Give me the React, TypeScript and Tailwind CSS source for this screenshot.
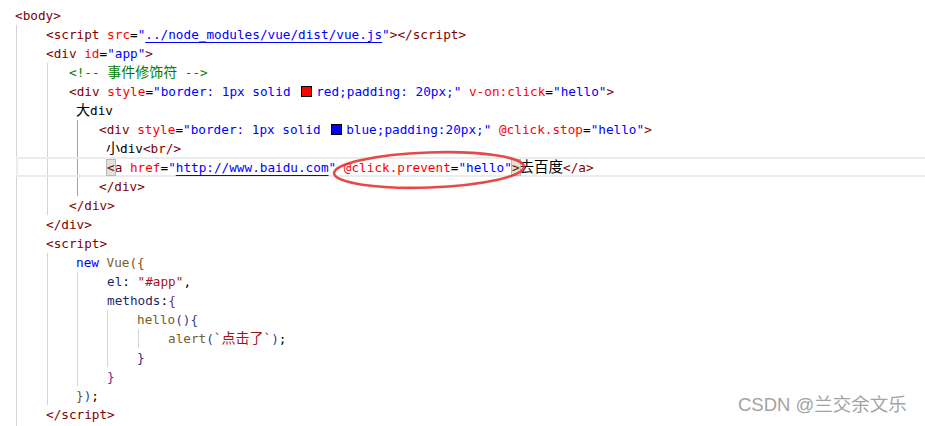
import React from "react";

const T = ({ c }: { c: string }) => <span className="text-[#800000]">{c}</span>;
const A = ({ c }: { c: string }) => <span className="text-[#ff0000]">{c}</span>;
const V = ({ c }: { c: string }) => <span className="text-[#0000ff]">{c}</span>;
const K = ({ c }: { c: string }) => <span className="text-black">{c}</span>;
const Z = ({ c, cls = "text-black" }: { c: string; cls?: string }) => (
  <span className={`font-['Noto_Sans_CJK_SC'] text-[14px] leading-none ${cls}`}>{c}</span>
);

const Guide = ({ cls }: { cls: string }) => <div className={`absolute w-px ${cls}`} />;

export default function App() {
  return (
    <div className="relative w-[925px] h-[426px] overflow-hidden bg-white">
      {/* indent guides */}
      <Guide cls="left-[16px] top-[25px] h-[401px] bg-[#d4d4d4]" />
      <Guide cls="left-[47px] top-[63px] h-[152px] bg-[#d4d4d4]" />
      <Guide cls="left-[77px] top-[120px] h-[76px] bg-[#a3a3a3]" />
      <Guide cls="left-[47px] top-[253px] h-[152px] bg-[#d4d4d4]" />
      <Guide cls="left-[77px] top-[272px] h-[114px] bg-[#d4d4d4]" />
      <Guide cls="left-[107px] top-[310px] h-[57px] bg-[#d4d4d4]" />
      <Guide cls="left-[138px] top-[329px] h-[19px] bg-[#d4d4d4]" />

      <div className="relative pt-[6px] font-['DejaVu_Sans_Mono','Noto_Sans_CJK_SC',monospace] text-[12.7px] leading-[19px] whitespace-pre">
        <div className="h-[19px] pl-[15px]">
          <T c="<body>" />
        </div>
        <div className="h-[19px] pl-[46px]">
          <T c="<script " />
          <A c="src" />
          <K c="=" />
          <V c={'"'} />
          <span className="text-[#0000ff] underline decoration-[#0000ff] underline-offset-[3px]">../node_modules/vue/dist/vue.js</span>
          <V c={'"'} />
          <T c="></script>" />
        </div>
        <div className="h-[19px] pl-[46px]">
          <T c="<div " />
          <A c="id" />
          <K c="=" />
          <V c={'"app"'} />
          <T c=">" />
        </div>
        <div className="h-[19px] pl-[69px] text-[#008000]">
          {"<!-- "}
          <Z c="事件修饰符" cls="text-[#008000]" />
          {" -->"}
        </div>
        <div className="h-[19px] pl-[69px]">
          <T c="<div " />
          <A c="style" />
          <K c="=" />
          <V c={'"border: 1px solid '} />
          <span className="inline-block w-[11px] h-[11px] ml-[3px] mr-[4px] bg-[#ff0000] border border-black align-[-1px]" />
          <V c={'red;padding: 20px;"'} />
          <K c=" " />
          <A c="v-on:click" />
          <K c="=" />
          <V c={'"hello"'} />
          <T c=">" />
        </div>
        <div className="h-[19px] pl-[76px]">
          <Z c="大" />
          <K c="div" />
        </div>
        <div className="h-[19px] pl-[99px]">
          <T c="<div " />
          <A c="style" />
          <K c="=" />
          <V c={'"border: 1px solid '} />
          <span className="inline-block w-[11px] h-[11px] ml-[3px] mr-[4px] bg-[#0000ff] border border-black align-[-1px]" />
          <V c={'blue;padding:20px;"'} />
          <K c=" " />
          <A c="@click.stop" />
          <K c="=" />
          <V c={'"hello"'} />
          <T c=">" />
        </div>
        <div className="h-[19px] pl-[106px]">
          <Z c="小" />
          <K c="div" />
          <T c="<br/>" />
        </div>
        <div className="-mt-[1px] h-[20px] ml-[16px] pl-[89px] box-border border-2 border-r-0 border-[#ececec] leading-[16px]">
          <span className="bg-[#dfe4da] outline outline-1 outline-[#b9b9b9] text-[#800000]">{"<"}</span>
          <T c="a " />
          <A c="href" />
          <K c="=" />
          <V c={'"'} />
          <span className="text-[#0000ff] underline decoration-[#0000ff] underline-offset-[3px]">http://www.baidu.com</span>
          <V c={'"'} />
          <K c=" " />
          <A c="@click.prevent" />
          <K c="=" />
          <V c={'"hello"'} />
          <span className="bg-[#dfe4da] outline outline-1 outline-[#b9b9b9] text-[#800000]">{">"}</span>
          <span className="font-['Noto_Sans_CJK_SC'] text-[14.5px] leading-none text-black">去百度</span>
          <T c="</a>" />
        </div>
        <div className="h-[19px] pl-[99px]">
          <T c="</div>" />
        </div>
        <div className="h-[19px] pl-[69px]">
          <T c="</div>" />
        </div>
        <div className="h-[19px] pl-[46px]">
          <T c="</div>" />
        </div>
        <div className="h-[19px] pl-[46px]">
          <T c="<script>" />
        </div>
        <div className="h-[19px] pl-[76px]">
          <span className="text-[#0000ff]">new</span>
          <K c=" " />
          <span className="text-[#795e26]">Vue</span>
          <span className="text-[#7a5020]">{"({"}</span>
        </div>
        <div className="h-[19px] pl-[107px]">
          <span className="text-[#2a1f66]">el</span>
          <K c=": " />
          <span className="text-[#a31515]">{'"#app"'}</span>
          <K c="," />
        </div>
        <div className="h-[19px] pl-[107px]">
          <span className="text-[#2a1f66]">methods</span>
          <K c=":" />
          <span className="text-[#6a2a8a]">{"{"}</span>
        </div>
        <div className="h-[19px] pl-[137px]">
          <span className="text-[#795e26]">hello</span>
          <span className="text-[#1f3fa0]">{"(){"}</span>
        </div>
        <div className="h-[19px] pl-[168px]">
          <span className="text-[#795e26]">alert</span>
          <span className="text-[#1f3fa0]">(</span>
          <span className="text-[#a31515]">`</span>
          <Z c="点击了" cls="text-[#a31515]" />
          <span className="text-[#a31515]">`</span>
          <span className="text-[#1f3fa0]">)</span>
          <K c=";" />
        </div>
        <div className="h-[19px] pl-[137px]">
          <span className="text-[#3a2a8a]">{"}"}</span>
        </div>
        <div className="h-[19px] pl-[107px]">
          <span className="text-[#6a2a8a]">{"}"}</span>
        </div>
        <div className="h-[19px] pl-[76px]">
          <span className="text-[#7a5020]">{"}"}</span>
          <span className="text-[#1f3fa0]">)</span>
          <K c=";" />
        </div>
        <div className="h-[19px] pl-[46px]">
          <T c="</script>" />
        </div>
      </div>

      {/* red hand-drawn ellipse */}
      <svg className="absolute left-0 top-0 pointer-events-none" width="925" height="426">
        <ellipse
          cx="429"
          cy="170"
          rx="95"
          ry="17.5"
          transform="rotate(-2 429 170)"
          fill="none"
          stroke="#e53a3a"
          strokeWidth="2.6"
          opacity="0.92"
        />
      </svg>

      {/* watermark */}
      <div className="absolute left-[738px] top-[395px] font-['Liberation_Sans','Noto_Sans_CJK_SC',sans-serif] text-[18.5px] leading-[20px] text-[#a3a3a3] [text-shadow:0_0_1px_#ffffff]">
        CSDN @兰交余文乐
      </div>
    </div>
  );
}
